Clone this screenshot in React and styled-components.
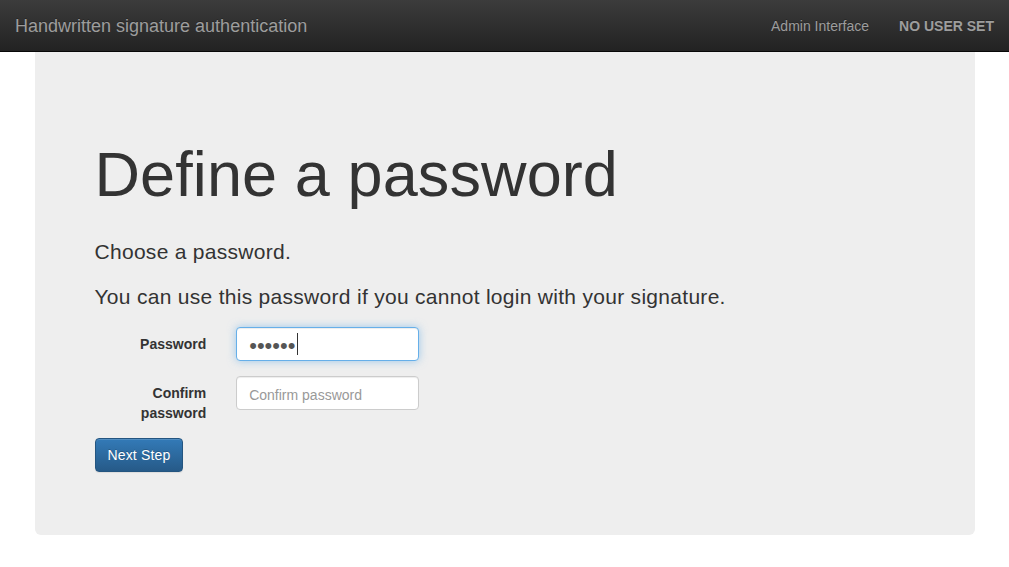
import { styled, createGlobalStyle } from 'styled-components';

const GlobalStyle = createGlobalStyle`
  html, body {
    margin: 0;
    padding: 0;
    background: #fff;
  }
  body {
    font-family: "Liberation Sans", Arial, Helvetica, sans-serif;
    font-size: 14px;
    line-height: 1.42857143;
    color: #333;
  }
  * {
    box-sizing: border-box;
  }
`;

export default function App() {
  return (
    <>
      <GlobalStyle />
      <Navbar>
        <Brand href="#">Handwritten signature authentication</Brand>
        <NavRight>
          <NavLink href="#">Admin Interface</NavLink>
          <NavLink href="#" $strong>
            No user set
          </NavLink>
        </NavRight>
      </Navbar>
      <Container>
        <Jumbotron>
          <Title>Define a password</Title>
          <Lead>Choose a password.</Lead>
          <Lead>You can use this password if you cannot login with your signature.</Lead>
          <Form onSubmit={(e) => e.preventDefault()}>
            <FormGroup>
              <Label htmlFor="pw">Password</Label>
              <InputCol>
                <Input id="pw" type="password" defaultValue="123456" $focused $secret />
                <Caret />
              </InputCol>
            </FormGroup>
            <FormGroup>
              <Label htmlFor="pw2">
                Confirm
                <br />
                password
              </Label>
              <InputCol>
                <Input id="pw2" type="password" placeholder="Confirm password" />
              </InputCol>
            </FormGroup>
            <Button type="submit">Next Step</Button>
          </Form>
        </Jumbotron>
      </Container>
    </>
  );
}

const Navbar = styled.nav`
  display: flex;
  align-items: flex-start;
  justify-content: space-between;
  height: 52px;
  padding: 1px 15px 0;
  background-image: linear-gradient(to bottom, #3c3c3c 0, #222 100%);
  border-bottom: 1px solid #080808;
`;

const Brand = styled.a`
  padding: 15px 0;
  font-size: 18px;
  line-height: 20px;
  color: #9d9d9d;
  text-decoration: none;
  text-shadow: 0 -1px 0 rgba(0, 0, 0, 0.25);
`;

const NavRight = styled.div`
  display: flex;
  margin-right: -15px;
`;

const NavLink = styled.a`
  padding: 15px;
  line-height: 20px;
  font-size: 14px;
  color: #9d9d9d;
  text-decoration: none;
  text-shadow: 0 -1px 0 rgba(0, 0, 0, 0.25);
  font-weight: ${(p) => (p.$strong ? 'bold' : 'normal')};
  text-transform: ${(p) => (p.$strong ? 'uppercase' : 'none')};
`;

const Container = styled.div`
  width: 970px;
  margin: 0 auto;
  padding: 0 15px;
`;

const Jumbotron = styled.div`
  background: #eee;
  border-radius: 0 0 6px 6px;
  padding: 48px 60px;
`;

const Title = styled.h1`
  margin: 40px 0 28px;
  font-size: 63px;
  font-weight: 500;
  line-height: 1.1;
  letter-spacing: 0.1px;
  color: #333;
`;

const Lead = styled.p`
  margin: 0 0 15px;
  font-size: 21px;
  font-weight: 200;
  line-height: 30px;
  letter-spacing: 0.29px;
`;

const Form = styled.form`
  display: flex;
  flex-direction: column;
  align-items: flex-start;
`;

const FormGroup = styled.div`
  display: grid;
  grid-template-columns: 141.7px 212.5px;
  margin: 0 -15px 15px;
`;

const Label = styled.label`
  padding: 7px 15px 0;
  text-align: right;
  font-weight: bold;
  line-height: 20px;
`;

const InputCol = styled.div`
  position: relative;
  padding: 0 15px;
`;

const Input = styled.input`
  display: block;
  width: 100%;
  height: 34px;
  padding: ${(p) => (p.$secret ? '4px 12px 0' : '8px 12px 4px')};
  font-family: inherit;
  font-size: ${(p) => (p.$secret ? '22px' : '14px')};
  line-height: ${(p) => (p.$secret ? '28px' : '20px')};
  color: #555;
  background: #fff;
  border: 1px solid ${(p) => (p.$focused ? '#66afe9' : '#ccc')};
  border-radius: 4px;
  outline: 0;
  box-shadow: ${(p) =>
    p.$focused
      ? 'inset 0 1px 1px rgba(0,0,0,.075), 0 0 8px rgba(102,175,233,.6)'
      : 'inset 0 1px 1px rgba(0,0,0,.075)'};
  &::placeholder {
    color: #999;
    font-size: 14px;
  }
`;

const Caret = styled.span`
  position: absolute;
  left: 76px;
  top: 6px;
  width: 1px;
  height: 22px;
  background: #333;
`;

const Button = styled.button`
  height: 34px;
  margin-bottom: 15px;
  padding: 6px 12px;
  font-family: inherit;
  font-size: 14px;
  line-height: 20px;
  letter-spacing: 0.15px;
  color: #fff;
  background-image: linear-gradient(to bottom, #337ab7 0, #265a88 100%);
  border: 1px solid #245580;
  border-radius: 4px;
  text-shadow: 0 -1px 0 rgba(0, 0, 0, 0.2);
  box-shadow: inset 0 1px 0 rgba(255, 255, 255, 0.15), 0 1px 1px rgba(0, 0, 0, 0.075);
  cursor: pointer;
`;
